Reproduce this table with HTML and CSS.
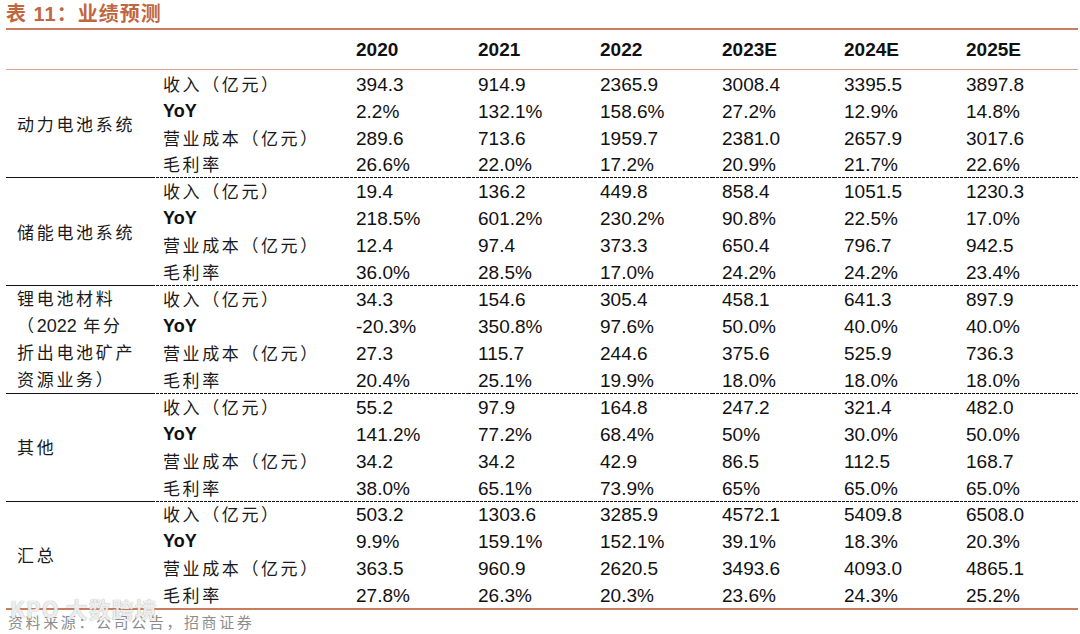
FILE: index.html
```html
<!DOCTYPE html>
<html lang="zh">
<head>
<meta charset="utf-8">
<title>业绩预测</title>
<link rel="stylesheet" href="styles.css">
</head>
<body>
<div class="page">
  <div class="title">表 11：业绩预测</div>
  <table class="tbl">
    <colgroup>
      <col class="c-seg"><col class="c-item">
      <col class="c-num"><col class="c-num"><col class="c-num"><col class="c-num"><col class="c-num"><col class="c-num">
    </colgroup>
    <thead>
      <tr><th></th><th></th><th>2020</th><th>2021</th><th>2022</th><th>2023E</th><th>2024E</th><th>2025E</th></tr>
    </thead>
    <tbody>
      <tr class="first"><td rowspan="4" class="seg">动力电池系统</td><td class="item">收入（亿元）</td><td>394.3</td><td>914.9</td><td>2365.9</td><td>3008.4</td><td>3395.5</td><td>3897.8</td></tr>
      <tr><td class="item yoy">YoY</td><td>2.2%</td><td>132.1%</td><td>158.6%</td><td>27.2%</td><td>12.9%</td><td>14.8%</td></tr>
      <tr><td class="item">营业成本（亿元）</td><td>289.6</td><td>713.6</td><td>1959.7</td><td>2381.0</td><td>2657.9</td><td>3017.6</td></tr>
      <tr><td class="item">毛利率</td><td>26.6%</td><td>22.0%</td><td>17.2%</td><td>20.9%</td><td>21.7%</td><td>22.6%</td></tr>
    </tbody>
    <tbody class="sep">
      <tr class="first"><td rowspan="4" class="seg">储能电池系统</td><td class="item">收入（亿元）</td><td>19.4</td><td>136.2</td><td>449.8</td><td>858.4</td><td>1051.5</td><td>1230.3</td></tr>
      <tr><td class="item yoy">YoY</td><td>218.5%</td><td>601.2%</td><td>230.2%</td><td>90.8%</td><td>22.5%</td><td>17.0%</td></tr>
      <tr><td class="item">营业成本（亿元）</td><td>12.4</td><td>97.4</td><td>373.3</td><td>650.4</td><td>796.7</td><td>942.5</td></tr>
      <tr><td class="item">毛利率</td><td>36.0%</td><td>28.5%</td><td>17.0%</td><td>24.2%</td><td>24.2%</td><td>23.4%</td></tr>
    </tbody>
    <tbody class="sep">
      <tr class="first"><td rowspan="4" class="seg multi">锂电池材料<br>（<span class="digits">2022</span> 年分<br>折出电池矿产<br>资源业务）</td><td class="item">收入（亿元）</td><td>34.3</td><td>154.6</td><td>305.4</td><td>458.1</td><td>641.3</td><td>897.9</td></tr>
      <tr><td class="item yoy">YoY</td><td>-20.3%</td><td>350.8%</td><td>97.6%</td><td>50.0%</td><td>40.0%</td><td>40.0%</td></tr>
      <tr><td class="item">营业成本（亿元）</td><td>27.3</td><td>115.7</td><td>244.6</td><td>375.6</td><td>525.9</td><td>736.3</td></tr>
      <tr><td class="item">毛利率</td><td>20.4%</td><td>25.1%</td><td>19.9%</td><td>18.0%</td><td>18.0%</td><td>18.0%</td></tr>
    </tbody>
    <tbody class="sep">
      <tr class="first"><td rowspan="4" class="seg">其他</td><td class="item">收入（亿元）</td><td>55.2</td><td>97.9</td><td>164.8</td><td>247.2</td><td>321.4</td><td>482.0</td></tr>
      <tr><td class="item yoy">YoY</td><td>141.2%</td><td>77.2%</td><td>68.4%</td><td>50%</td><td>30.0%</td><td>50.0%</td></tr>
      <tr><td class="item">营业成本（亿元）</td><td>34.2</td><td>34.2</td><td>42.9</td><td>86.5</td><td>112.5</td><td>168.7</td></tr>
      <tr><td class="item">毛利率</td><td>38.0%</td><td>65.1%</td><td>73.9%</td><td>65%</td><td>65.0%</td><td>65.0%</td></tr>
    </tbody>
    <tbody class="sep last">
      <tr class="first"><td rowspan="4" class="seg">汇总</td><td class="item">收入（亿元）</td><td>503.2</td><td>1303.6</td><td>3285.9</td><td>4572.1</td><td>5409.8</td><td>6508.0</td></tr>
      <tr><td class="item yoy">YoY</td><td>9.9%</td><td>159.1%</td><td>152.1%</td><td>39.1%</td><td>18.3%</td><td>20.3%</td></tr>
      <tr><td class="item">营业成本（亿元）</td><td>363.5</td><td>960.9</td><td>2620.5</td><td>3493.6</td><td>4093.0</td><td>4865.1</td></tr>
      <tr><td class="item">毛利率</td><td>27.8%</td><td>26.3%</td><td>20.3%</td><td>23.6%</td><td>24.3%</td><td>25.2%</td></tr>
    </tbody>
  </table>
  <div class="source">资料来源：公司公告，招商证券<span class="wm">KPO 大数跨境</span></div>
</div>
</body>
</html>
```

FILE: styles.css
```css
html, body {
  margin: 0;
  padding: 0;
  background: #ffffff;
}

.page {
  width: 1072px;
  margin-left: 6px;
  position: relative;
  font-family: "Liberation Sans", Arial, "Noto Sans CJK SC", sans-serif;
  color: #111;
}

.title {
  height: 28px;
  line-height: 28px;
  font-family: "Liberation Sans", "Noto Sans CJK SC", sans-serif;
  font-size: 20px;
  font-weight: bold;
  letter-spacing: 1px;
  color: #c1673f;
  border-bottom: 2px solid #c97c5e;
}

.tbl {
  width: 1072px;
  border-collapse: separate;
  border-spacing: 0;
  table-layout: fixed;
  border-bottom: 2px solid #c97c5e;
}

.c-seg { width: 146px; }
.c-item { width: 194px; }
.c-num { width: 122px; }

.tbl th {
  height: 39px;
  padding: 0 0 0 10px;
  text-align: left;
  font-size: 19px;
  font-weight: bold;
  color: #111;
  border-bottom: 1px solid #d9a192;
  vertical-align: middle;
}

.tbl td {
  height: 26.85px;
  padding: 0 0 2px 10px;
  font-size: 19px;
  line-height: 21px;
  vertical-align: bottom;
  box-sizing: border-box;
  white-space: nowrap;
}

.tbl td.item {
  padding-left: 11px;
  padding-bottom: 3px;
  font-family: "Noto Sans CJK SC", sans-serif;
  font-size: 17px;
  letter-spacing: 2.6px;
  color: #1a1a1a;
}

.tbl td.item.yoy {
  padding-bottom: 2px;
  font-family: "Liberation Sans", Arial, sans-serif;
  font-size: 18px;
  font-weight: bold;
  letter-spacing: 0;
  color: #111;
}

.tbl td.seg {
  padding: 0 0 0 11px;
  font-family: "Noto Sans CJK SC", sans-serif;
  font-size: 17px;
  letter-spacing: 2.7px;
  color: #1a1a1a;
  vertical-align: middle;
}

.tbl td.seg.multi {
  line-height: 26.85px;
}

.digits {
  font-family: "Liberation Sans", Arial, sans-serif;
  font-size: 18px;
  letter-spacing: 0;
}

.sep tr.first td {
  background: repeating-linear-gradient(to right, #111 0 3px, transparent 3px 4px) top left / 100% 1px no-repeat;
}

.sep tr.first td.seg {
  background: linear-gradient(#111, #111) top left / 100% 1px no-repeat;
}

.source {
  height: 24px;
  line-height: 24px;
  padding-left: 2px;
  font-family: "Noto Sans CJK SC", sans-serif;
  font-size: 15px;
  letter-spacing: 2.6px;
  color: #8c8c8c;
  position: relative;
}

.wm {
  position: absolute;
  left: 4px;
  top: -14px;
  font-family: "Noto Sans CJK SC", sans-serif;
  font-size: 22px;
  font-weight: bold;
  letter-spacing: 1px;
  color: rgba(255, 255, 255, 0.85);
  text-shadow: 0 0 1px rgba(110, 110, 110, 0.8);
}
```
